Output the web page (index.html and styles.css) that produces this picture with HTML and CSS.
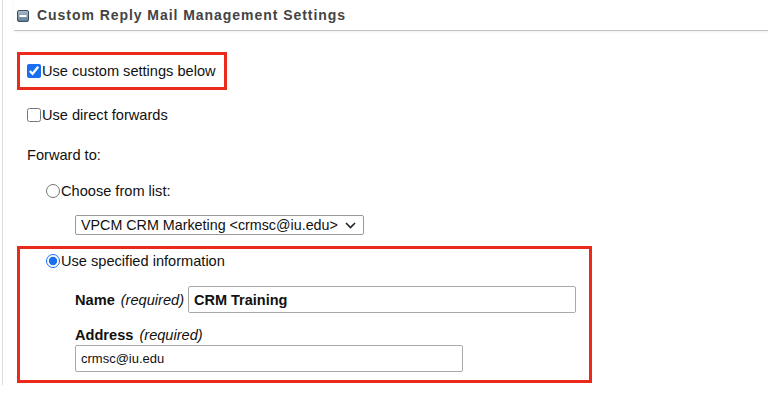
FILE: index.html
```html
<!DOCTYPE html>
<html>
  <head>
    <meta charset="utf-8" />
    <title>Custom Reply Mail Management Settings</title>
    <link rel="stylesheet" href="styles.css">
  </head>
  <body>
    <div class="panel">
      <h2 class="section-title">
        <svg class="toggle" width="12" height="12" viewBox="0 0 12 12">
          <defs>
            <linearGradient id="tg" x1="0" y1="0" x2="0" y2="1">
              <stop offset="0" stop-color="#a9bccd" />
              <stop offset="1" stop-color="#5f7c96" />
            </linearGradient>
          </defs>
          <rect x="0.5" y="0.5" width="11" height="11" rx="1.5" fill="url(#tg)" stroke="#3f4f5e" />
          <rect x="2.5" y="5" width="7" height="2" fill="#fff" />
        </svg>
        Custom Reply Mail Management Settings
      </h2>

      <div class="highlight first">
        <label class="row">
          <input type="checkbox" checked />Use custom settings below
        </label>
      </div>

      <label class="row direct">
        <input type="checkbox" />Use direct forwards
      </label>

      <div class="row forward">Forward to:</div>

      <label class="row choose">
        <input type="radio" name="fwd" />Choose from list:
      </label>

      <div class="select-wrap">
        <select class="list">
          <option>VPCM CRM Marketing &lt;crmsc@iu.edu&gt;</option>
        </select>
        <svg class="chev" width="11" height="7" viewBox="0 0 11 7">
          <path d="M1 1l4.5 4.5L10 1" fill="none" stroke="#222" stroke-width="1.6" />
        </svg>
      </div>

      <div class="highlight second">
        <label class="row specified">
          <input type="radio" name="fwd" checked />Use specified information
        </label>
        <div class="name-row">
          <span class="lbl">Name</span>
          <span class="req">(required)</span>
          <input class="field bold" type="text" value="CRM Training" />
        </div>
        <div class="addr-label">
          <span class="lbl">Address</span>
          <span class="req">(required)</span>
        </div>
        <input class="field addr" type="text" value="crmsc@iu.edu" />
      </div>
    </div>
  </body>
</html>
```

FILE: styles.css
```css
body {
  margin: 0;
  background: #fff;
  font-family: "Liberation Sans", Arial, sans-serif;
  font-size: 14.6px;
  color: #111;
}

.panel {
  margin-left: 2px;
  height: 385px;
  border-left: 1px solid #dcdcdc;
}

.section-title {
  margin: 0 0 0 11px;
  height: 30px;
  padding-left: 3px;
  display: flex;
  align-items: center;
  gap: 8px;
  font-size: 14px;
  font-weight: bold;
  letter-spacing: 0.95px;
  color: #444;
  border-bottom: 1px solid #c4c4c4;
  box-shadow: 0 1px 2px #f0f0f0;
}

.toggle {
  flex: none;
  margin-top: 1px;
}

.row {
  display: flex;
  align-items: center;
  height: 24px;
}

.row input {
  margin: 0 1px 0 0;
  width: 14px;
  height: 14px;
  accent-color: #1a6ef0;
}

.highlight {
  margin-left: 14px;
  border: 3px solid #ea2a1c;
  box-sizing: border-box;
}

.first {
  margin-top: 21px;
  width: 210px;
  height: 38px;
  padding: 4px 0 0 7px;
}

.direct {
  margin-top: 13px;
  padding-left: 24px;
}

.forward {
  margin-top: 16px;
  padding-left: 24px;
}

.choose {
  margin-top: 12px;
  padding-left: 43px;
}

.select-wrap {
  position: relative;
  margin: 12px 0 0 72px;
  width: 289px;
  height: 20px;
}

.list {
  appearance: none;
  width: 100%;
  height: 20px;
  margin: 0;
  padding: 0 0 0 5px;
  border: 1px solid #999;
  border-radius: 2px;
  background: #fff;
  font-family: inherit;
  font-size: 14.3px;
  color: #111;
}

.chev {
  position: absolute;
  right: 8px;
  top: 7px;
}

.second {
  margin-top: 11px;
  width: 575px;
  height: 137px;
  padding: 1px 0 0 26px;
}

.specified {
  height: 22px;
}

.name-row {
  display: flex;
  align-items: center;
  margin: 14px 0 0 29px;
}

.lbl {
  font-weight: bold;
}

.req {
  font-style: italic;
  margin-left: 6px;
  margin-right: 4px;
}

.field {
  box-sizing: border-box;
  width: 388px;
  height: 27px;
  margin: 0;
  padding: 0 5px;
  border: 1px solid #aaa;
  border-radius: 2px;
  font-family: inherit;
  color: #111;
}

.bold {
  font-weight: bold;
  font-size: 14.5px;
}

.addr-label {
  display: flex;
  align-items: center;
  height: 18px;
  margin: 13px 0 0 29px;
}

.addr {
  display: block;
  margin: 1px 0 0 29px;
  font-size: 13px;
}
```
